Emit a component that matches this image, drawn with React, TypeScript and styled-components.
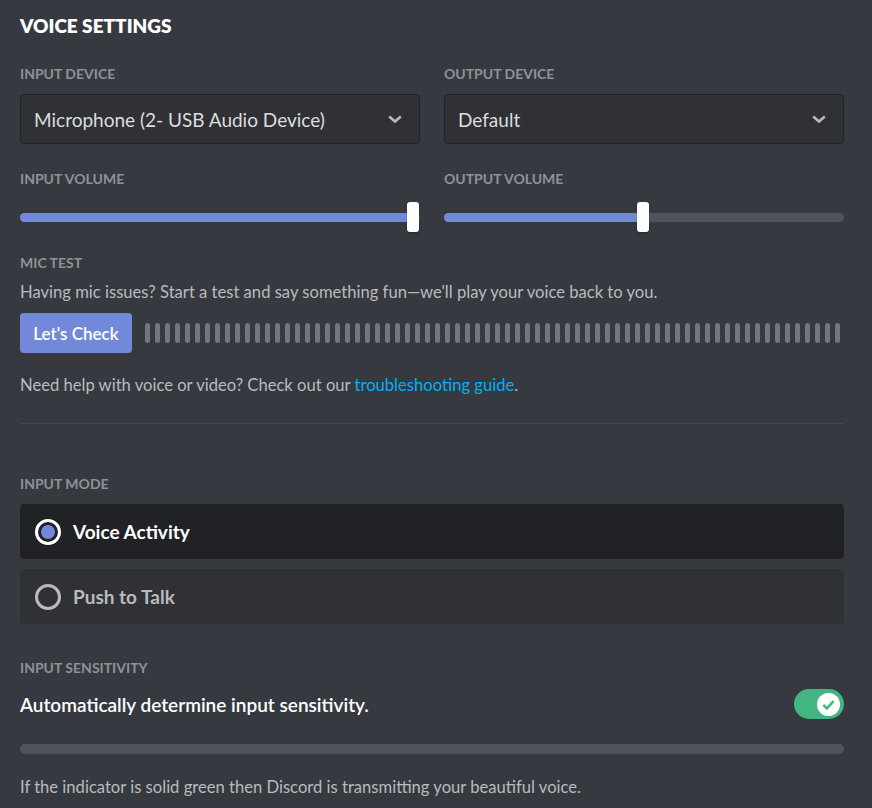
import React from "react";
import styled, { createGlobalStyle } from "styled-components";

const GlobalStyle = createGlobalStyle`
  body {
    margin: 0;
    background: #36393f;
    font-family: Lato, "Noto Sans", sans-serif;
  }
`;

const Page = styled.div`
  background: #36393f;
  min-height: 808px;
  padding: 14px 28px 0 20px;
  box-sizing: border-box;
  width: 872px;
`;

const Title = styled.h2`
  margin: 0 0 26px;
  font-size: 19px;
  line-height: 24px;
  font-weight: 800;
  color: #fff;
  text-transform: uppercase;
`;

const Label = styled.h5<{ $top?: number }>`
  margin: ${(p) => p.$top ?? 0}px 0 0;
  font-size: 14px;
  line-height: 20px;
  font-weight: 700;
  color: #8e9297;
  text-transform: uppercase;
`;

const Columns = styled.div`
  display: grid;
  grid-template-columns: 400px 400px;
  column-gap: 24px;
`;

const Column = styled.div`
  display: flex;
  flex-direction: column;
`;

const Select = styled.div`
  margin-top: 10px;
  height: 50px;
  box-sizing: border-box;
  background: #2f3136;
  border: 1px solid #202225;
  border-radius: 4px;
  display: flex;
  align-items: center;
  justify-content: space-between;
  padding: 0 14px 0 13px;
  color: #dcddde;
  font-size: 19px;
`;

const SliderWrap = styled.div`
  position: relative;
  margin-top: 13px;
  height: 30px;
  display: flex;
  align-items: center;
`;

const Track = styled.div`
  width: 100%;
  height: 9px;
  border-radius: 5px;
  background: #4f545c;
  overflow: hidden;
`;

const Fill = styled.div`
  height: 100%;
  background: #7289da;
`;

const Grabber = styled.div`
  position: absolute;
  top: 0;
  width: 12px;
  height: 30px;
  margin-left: -7px;
  background: #fff;
  border-radius: 3px;
  box-shadow: 0 1px 2px rgba(0, 0, 0, 0.3);
`;

const Description = styled.p<{ $top: number }>`
  margin: ${(p) => p.$top}px 0 0;
  font-size: 16.6px;
  line-height: 20px;
  color: #b9bbbe;
`;

const Link = styled.a`
  color: #00b0f4;
  text-decoration: none;
`;

const MicRow = styled.div`
  margin-top: 11px;
  display: flex;
  align-items: center;
  gap: 13px;
`;

const Button = styled.button`
  height: 40px;
  width: 112px;
  border: none;
  border-radius: 4px;
  background: #7289da;
  color: #fff;
  font-family: inherit;
  font-size: 17px;
  font-weight: 600;
  flex-shrink: 0;
`;

const Meter = styled.div`
  display: flex;
  gap: 5px;
`;

const MeterBar = styled.span`
  width: 5px;
  height: 20px;
  border-radius: 3px;
  background: #72767d;
`;

const Divider = styled.div`
  margin-top: 28px;
  height: 1px;
  background: #45484e;
`;

const RadioGroup = styled.div`
  margin-top: 10px;
  display: flex;
  flex-direction: column;
  gap: 10px;
`;

const RadioItem = styled.div<{ $selected?: boolean }>`
  height: 55px;
  border-radius: 4px;
  background: ${(p) => (p.$selected ? "#202225" : "#2f3136")};
  display: flex;
  align-items: center;
  padding-left: 15px;
  gap: 12px;
  color: ${(p) => (p.$selected ? "#fff" : "#b9bbbe")};
  font-size: 19px;
  font-weight: 700;
`;

const RadioCircle = styled.span<{ $selected?: boolean }>`
  width: 26px;
  height: 26px;
  box-sizing: border-box;
  border-radius: 50%;
  border: 3px solid ${(p) => (p.$selected ? "#fff" : "#b9bbbe")};
  display: flex;
  align-items: center;
  justify-content: center;
  &::after {
    content: "";
    display: ${(p) => (p.$selected ? "block" : "none")};
    width: 14px;
    height: 14px;
    border-radius: 50%;
    background: #7289da;
  }
`;

const ToggleRow = styled.div`
  margin-top: 11px;
  height: 30px;
  display: flex;
  align-items: center;
  justify-content: space-between;
  color: #fff;
  font-size: 19px;
  font-weight: 600;
`;

const Toggle = styled.div`
  width: 50px;
  height: 30px;
  border-radius: 15px;
  background: #43b581;
  display: flex;
  align-items: center;
  justify-content: flex-end;
  padding-right: 4px;
  box-sizing: border-box;
`;

const Knob = styled.span`
  width: 23px;
  height: 23px;
  border-radius: 50%;
  background: #fff;
  display: flex;
  align-items: center;
  justify-content: center;
`;

const SensitivityBar = styled.div`
  margin-top: 25px;
  height: 10px;
  border-radius: 5px;
  background: #4f545c;
`;

function Chevron() {
  return (
    <svg width="20" height="20" viewBox="0 0 24 24">
      <path
        d="M5 9l7 6 7-6"
        fill="none"
        stroke="#b9bbbe"
        strokeWidth="3"
      />
    </svg>
  );
}

function Slider({ value }: { value: number }) {
  return (
    <SliderWrap>
      <Track>
        <Fill style={{ width: `${value}%` }} />
      </Track>
      <Grabber style={{ left: `${value}%` }} />
    </SliderWrap>
  );
}

export default function App() {
  const bars = Array.from({ length: 70 });
  return (
    <Page>
      <GlobalStyle />
      <Title>Voice Settings</Title>
      <Columns>
        <Column>
          <Label>Input Device</Label>
          <Select>
            Microphone (2- USB Audio Device)
            <Chevron />
          </Select>
          <Label $top={25}>Input Volume</Label>
          <Slider value={98.5} />
        </Column>
        <Column>
          <Label>Output Device</Label>
          <Select>
            Default
            <Chevron />
          </Select>
          <Label $top={25}>Output Volume</Label>
          <Slider value={50} />
        </Column>
      </Columns>

      <Label $top={21}>Mic Test</Label>
      <Description $top={9}>
        Having mic issues? Start a test and say something fun—we'll play your
        voice back to you.
      </Description>
      <MicRow>
        <Button>Let's Check</Button>
        <Meter>
          {bars.map((_, i) => (
            <MeterBar key={i} />
          ))}
        </Meter>
      </MicRow>
      <Description $top={22}>
        Need help with voice or video? Check out our{" "}
        <Link href="#">troubleshooting guide</Link>.
      </Description>
      <Divider />

      <Label $top={50}>Input Mode</Label>
      <RadioGroup>
        <RadioItem $selected>
          <RadioCircle $selected />
          Voice Activity
        </RadioItem>
        <RadioItem>
          <RadioCircle />
          Push to Talk
        </RadioItem>
      </RadioGroup>

      <Label $top={34}>Input Sensitivity</Label>
      <ToggleRow>
        Automatically determine input sensitivity.
        <Toggle>
          <Knob>
            <svg width="17" height="17" viewBox="0 0 20 20">
              <path
                d="M4 10.5l4 4 8-8.5"
                fill="none"
                stroke="#43b581"
                strokeWidth="3"
              />
            </svg>
          </Knob>
        </Toggle>
      </ToggleRow>
      <SensitivityBar />
      <Description $top={23}>
        If the indicator is solid green then Discord is transmitting your
        beautiful voice.
      </Description>
    </Page>
  );
}
